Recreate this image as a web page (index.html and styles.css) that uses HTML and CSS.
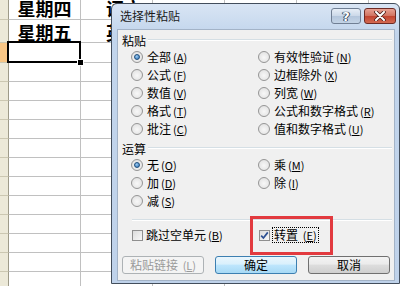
FILE: index.html
```html
<!DOCTYPE html>
<html lang="zh-CN">
<head>
  <meta charset="UTF-8" />
  <title>选择性粘贴</title>
  <link rel="stylesheet" href="styles.css">
</head>
<body>

  <div class="sheet">
    <div class="row r1">
      <div class="hd"></div>
      <div class="cell a big">星期四</div>
      <div class="cell b big">语文</div>
      <div class="cell"></div>
      <div class="cell"></div>
      <div class="cell"></div>
    </div>
    <div class="row r2">
      <div class="hd"></div>
      <div class="cell a big">星期五</div>
      <div class="cell b big">英语</div>
      <div class="cell"></div>
      <div class="cell"></div>
      <div class="cell"></div>
    </div>
    <div class="row r3">
      <div class="hd sel"></div>
      <div class="cell a active"></div>
      <div class="cell b"></div>
      <div class="cell"></div>
      <div class="cell"></div>
      <div class="cell"></div>
    </div>
    <div class="row"><div class="hd"></div><div class="cell a"></div><div class="cell b"></div><div class="cell"></div></div>
    <div class="row"><div class="hd"></div><div class="cell a"></div><div class="cell b"></div><div class="cell"></div></div>
    <div class="row"><div class="hd"></div><div class="cell a"></div><div class="cell b"></div><div class="cell"></div></div>
    <div class="row"><div class="hd"></div><div class="cell a"></div><div class="cell b"></div><div class="cell"></div></div>
    <div class="row"><div class="hd"></div><div class="cell a"></div><div class="cell b"></div><div class="cell"></div></div>
    <div class="row"><div class="hd"></div><div class="cell a"></div><div class="cell b"></div><div class="cell"></div></div>
    <div class="row"><div class="hd"></div><div class="cell a"></div><div class="cell b"></div><div class="cell"></div></div>
    <div class="row"><div class="hd"></div><div class="cell a"></div><div class="cell b"></div><div class="cell"></div></div>
    <div class="row"><div class="hd"></div><div class="cell a"></div><div class="cell b"></div><div class="cell"></div></div>
    <div class="row"><div class="hd"></div><div class="cell a"></div><div class="cell b"></div><div class="cell"></div></div>
    <div class="row"><div class="hd"></div><div class="cell a"></div><div class="cell b"></div><div class="cell"></div></div>
    <div class="row"><div class="hd"></div><div class="cell a"></div><div class="cell b"></div><div class="cell"></div></div>
  </div>

  <div class="dialog">
    <div class="titlebar">
      <span class="title">选择性粘贴</span>
      <div class="tbtns">
        <span class="tb help">?</span>
        <span class="tb close">
          <svg width="14" height="10" viewBox="0 0 14 10">
            <path d="M3 1 L11 9 M11 1 L3 9" stroke="#4a1e1a" stroke-width="3.6" stroke-linecap="round"/>
            <path d="M3 1 L11 9 M11 1 L3 9" stroke="#fff" stroke-width="2" stroke-linecap="round"/>
          </svg>
        </span>
      </div>
    </div>

    <div class="panel">
      <div class="group"><span>粘贴</span></div>
      <div class="opts">
        <label class="opt"><span class="radio on"></span>全部 <span class="key">(<u>A</u>)</span></label>
        <label class="opt"><span class="radio"></span>有效性验证 <span class="key">(<u>N</u>)</span></label>
        <label class="opt"><span class="radio"></span>公式 <span class="key">(<u>F</u>)</span></label>
        <label class="opt"><span class="radio"></span>边框除外 <span class="key">(<u>X</u>)</span></label>
        <label class="opt"><span class="radio"></span>数值 <span class="key">(<u>V</u>)</span></label>
        <label class="opt"><span class="radio"></span>列宽 <span class="key">(<u>W</u>)</span></label>
        <label class="opt"><span class="radio"></span>格式 <span class="key">(<u>T</u>)</span></label>
        <label class="opt"><span class="radio"></span>公式和数字格式 <span class="key">(<u>R</u>)</span></label>
        <label class="opt"><span class="radio"></span>批注 <span class="key">(<u>C</u>)</span></label>
        <label class="opt"><span class="radio"></span>值和数字格式 <span class="key">(<u>U</u>)</span></label>
      </div>

      <div class="group op"><span>运算</span></div>
      <div class="opts">
        <label class="opt"><span class="radio on"></span>无 <span class="key">(<u>O</u>)</span></label>
        <label class="opt"><span class="radio"></span>乘 <span class="key">(<u>M</u>)</span></label>
        <label class="opt"><span class="radio"></span>加 <span class="key">(<u>D</u>)</span></label>
        <label class="opt"><span class="radio"></span>除 <span class="key">(<u>I</u>)</span></label>
        <label class="opt"><span class="radio"></span>减 <span class="key">(<u>S</u>)</span></label>
      </div>

      <div class="sep"></div>

      <div class="checks">
        <label class="opt"><span class="check"></span>跳过空单元 <span class="key">(<u>B</u>)</span></label>
        <label class="opt">
          <span class="check">
            <svg width="9" height="9" viewBox="0 0 9 9"><path d="M1.2 4.6 L3.4 7 L7.8 1.4" fill="none" stroke="#2c4f92" stroke-width="1.7"/></svg>
          </span>
          <span class="focus">转置 <span class="key">(<u>E</u>)</span></span>
        </label>
      </div>

      <div class="buttons">
        <button class="btn disabled">粘贴链接 <span class="key">(<u>L</u>)</span></button>
        <button class="btn primary">确定</button>
        <button class="btn">取消</button>
      </div>

      <div class="mark"></div>
    </div>
  </div>

</body>
</html>
```

FILE: styles.css
```css
body {
  margin: 0;
  background: #fff;
  font-family: "Noto Sans CJK SC", sans-serif;
  overflow: hidden;
}

/* spreadsheet behind the dialog */
.sheet {
  display: flex;
  flex-direction: column;
}
.row {
  display: flex;
  height: 19px;
}
.r1 { height: 20px; }
.r2 { height: 23px; }
.r3 { height: 20px; }
.hd {
  width: 9px;
  flex: none;
  box-sizing: border-box;
  background: #ece9d8;
  border-right: 1px solid #9d9a88;
  border-bottom: 1px solid #cbc7b1;
}
.hd.sel {
  background: #f8c685;
}
.cell {
  width: 72px;
  flex: none;
  box-sizing: border-box;
  border-right: 1px solid #c0c0c0;
  border-bottom: 1px solid #c0c0c0;
  position: relative;
}
.big {
  display: flex;
  align-items: center;
  justify-content: center;
  overflow: hidden;
  font-size: 18px;
  font-weight: bold;
  line-height: 18px;
  color: #000;
}
.r1 .big {
  padding-bottom: 3px;
}
.r2 .big {
  padding-top: 2px;
}
.cell.b.big {
  justify-content: flex-start;
  padding-left: 25px;
}
.active::after {
  content: "";
  position: absolute;
  left: -2px;
  top: -2px;
  right: -1px;
  bottom: -1px;
  border: 2px solid #000;
}
.active::before {
  content: "";
  position: absolute;
  right: -4px;
  bottom: -4px;
  width: 5px;
  height: 5px;
  background: #000;
  border: 1px solid #fff;
  z-index: 1;
}

/* paste special dialog */
.dialog {
  position: absolute;
  left: 111px;
  top: 3px;
  width: 289px;
  height: 281px;
  box-sizing: border-box;
  border: 1px solid #434e5c;
  border-radius: 6px 6px 0 0;
  background: linear-gradient(#d9e5f4, #c2d5ec 30px, #bfd2ea);
  display: flex;
  flex-direction: column;
  font-size: 12px;
  color: #000;
}
.titlebar {
  height: 25px;
  flex: none;
  display: flex;
  align-items: flex-start;
  justify-content: space-between;
}
.title {
  margin: 4px 0 0 8px;
  line-height: 16px;
  color: #1b1b1b;
}
.tbtns {
  display: flex;
  gap: 3px;
  margin: 4px 3px 0 0;
}
.tb {
  height: 16px;
  box-sizing: border-box;
  border-radius: 3px;
  display: flex;
  align-items: center;
  justify-content: center;
}
.help {
  width: 30px;
  border: 1px solid #707f94;
  background: linear-gradient(#e7eef7, #cbd8e8 50%, #b4c6dc 51%, #c4d4e6);
  color: #fff;
  font-family: "DejaVu Sans", sans-serif;
  font-weight: bold;
  font-size: 13px;
  text-shadow: 0 0 1px #26354a, 0 0 1px #26354a, 1px 0 0 #3c4d66, -1px 0 0 #3c4d66;
}
.close {
  width: 32px;
  border: 1px solid #6e2b25;
  background: linear-gradient(#e8a193, #d0725f 50%, #c1432f 51%, #d36a52);
}
.panel {
  flex: 1;
  margin: 0 4px 2px 5px;
  box-sizing: border-box;
  background: #f0f0f0;
  border: 1px solid #a3b3c7;
  padding-top: 2px;
  position: relative;
}
.group {
  height: 16px;
  display: flex;
  align-items: center;
  padding-left: 4px;
  gap: 2px;
}
.group::after {
  content: "";
  flex: 1;
  height: 0;
  border-top: 1px solid #d5dfe5;
  border-bottom: 1px solid #fff;
  margin-right: 2px;
}
.group.op {
  margin-top: 2px;
}
.opts,
.checks {
  display: grid;
  grid-template-columns: 127px 1fr;
  padding-left: 13px;
}
.opt {
  height: 18px;
  display: flex;
  align-items: center;
  white-space: nowrap;
  line-height: 14px;
}
.key {
  font-size: 11px;
  margin-left: 2px;
}
.radio {
  width: 12px;
  height: 12px;
  box-sizing: border-box;
  border-radius: 50%;
  border: 1px solid #959595;
  background: radial-gradient(circle at 50% 55%, #f8f8f8, #dcdcdc);
  margin-right: 4px;
  position: relative;
  flex: none;
}
.radio.on::after {
  content: "";
  position: absolute;
  left: 2px;
  top: 2px;
  width: 6px;
  height: 6px;
  box-sizing: border-box;
  border-radius: 50%;
  border: 1px solid #1f4e7c;
  background: radial-gradient(circle at 40% 35%, #9ccbf2, #2a6fb4);
}
.sep {
  margin: 9px 2px 0 14px;
  border-top: 1px solid #d5dfe5;
  border-bottom: 1px solid #fff;
}
.checks {
  margin-top: 5px;
  padding-left: 14px;
}
.check {
  width: 11px;
  height: 11px;
  box-sizing: border-box;
  border: 1px solid #8f8f8f;
  background: linear-gradient(135deg, #dcdcdc, #f8f8f8);
  margin-right: 3px;
  flex: none;
  display: flex;
  align-items: center;
  justify-content: center;
}
.focus {
  outline: 1px dotted #000;
  padding: 0 1px;
}
.buttons {
  display: flex;
  gap: 11px;
  margin-top: 12px;
  padding-left: 4px;
}
.btn {
  width: 82px;
  height: 18px;
  padding: 0;
  box-sizing: border-box;
  border: 1px solid #707070;
  border-radius: 3px;
  background: linear-gradient(#f3f3f3, #ebebeb 45%, #dddddd 50%, #cfcfcf);
  font-family: "Noto Sans CJK SC", sans-serif;
  font-size: 12px;
  line-height: 14px;
  color: #000;
}
.btn.primary {
  border-color: #3c7fb1;
  background: linear-gradient(#eaf6fd, #d9f0fc 45%, #bee6fd 50%, #a7d9f5);
}
.btn.disabled {
  border-color: #adb2b5;
  background: #f4f4f4;
  color: #9a9a9a;
}
.mark {
  position: absolute;
  left: 132px;
  top: 186px;
  width: 83px;
  height: 39px;
  box-sizing: border-box;
  border: 3px solid #e23a3f;
}
```
